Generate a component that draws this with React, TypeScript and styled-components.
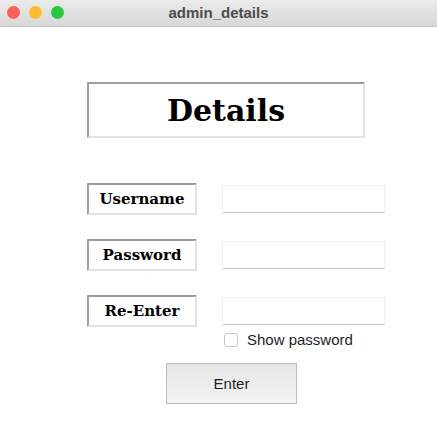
import { FC } from "react";
import styled, { createGlobalStyle } from "styled-components";

const GlobalStyle = createGlobalStyle`
  html, body {
    margin: 0;
    padding: 0;
    background: #ffffff;
  }
`;

const fields = ["Username", "Password", "Re-Enter"];

const App: FC = () => {
  return (
    <>
      <GlobalStyle />
      <Window>
        <TitleBar>
          <Lights>
            <Light color="#fe5f57" />
            <Light color="#febc2e" />
            <Light color="#27c93f" />
          </Lights>
          <WindowTitle>admin_details</WindowTitle>
        </TitleBar>

        <Content>
          <Heading>Details</Heading>

          <Form>
            {fields.map((name) => (
              <FieldRow key={name}>
                <FieldLabel>{name}</FieldLabel>
                <Entry type={name === "Username" ? "text" : "password"} />
              </FieldRow>
            ))}
          </Form>

          <CheckRow>
            <CheckBox type="checkbox" />
            <CheckText>Show password</CheckText>
          </CheckRow>

          <EnterButton>Enter</EnterButton>
        </Content>
      </Window>
    </>
  );
};

export default App;

const Window = styled.div`
  width: 437px;
  height: 426px;
  background: #ffffff;
  display: flex;
  flex-direction: column;
  overflow: hidden;
`;

const TitleBar = styled.div`
  position: relative;
  height: 26px;
  flex-shrink: 0;
  background: linear-gradient(#ebebeb, #d8d8d8);
  border-bottom: 1px solid #c2c2c2;
  display: flex;
  align-items: center;
  justify-content: center;
`;

const Lights = styled.div`
  position: absolute;
  left: 7px;
  top: 6px;
  display: flex;
  gap: 9px;
`;

const Light = styled.span<{ color: string }>`
  width: 13px;
  height: 13px;
  border-radius: 50%;
  background: ${(p) => p.color};
`;

const WindowTitle = styled.div`
  font-family: "Liberation Sans", Arial, sans-serif;
  font-weight: bold;
  font-size: 15px;
  color: #4d4d4d;
  margin-top: -2px;
`;

const Content = styled.div`
  display: flex;
  flex-direction: column;
  padding: 55px 0 0 87px;
`;

const sunken = `
  border-style: solid;
  border-width: 2px;
  border-color: #9e9e9e #e3e3e3 #e3e3e3 #9e9e9e;
  background: #ffffff;
  box-sizing: border-box;
`;

const Heading = styled.div`
  ${sunken}
  width: 278px;
  height: 56px;
  display: flex;
  align-items: center;
  justify-content: center;
  font-family: "DejaVu Serif", Georgia, serif;
  font-weight: bold;
  font-size: 30px;
  color: #000000;
`;

const Form = styled.div`
  display: flex;
  flex-direction: column;
  gap: 24px;
  margin-top: 45px;
`;

const FieldRow = styled.div`
  display: grid;
  grid-template-columns: 110px 163px;
  column-gap: 25px;
  align-items: center;
`;

const FieldLabel = styled.div`
  ${sunken}
  height: 32px;
  display: flex;
  align-items: center;
  justify-content: center;
  font-family: "DejaVu Serif", Georgia, serif;
  font-weight: bold;
  font-size: 15px;
  color: #000000;
`;

const Entry = styled.input`
  box-sizing: border-box;
  width: 163px;
  height: 28px;
  margin: 0;
  padding: 0 4px;
  border: 1px solid #efefef;
  border-bottom-color: #c8c8c8;
  background: #ffffff;
  outline: none;
`;

const CheckRow = styled.div`
  display: flex;
  align-items: center;
  gap: 9px;
  height: 16px;
  margin: 5px 0 0 137px;
`;

const CheckBox = styled.input`
  appearance: none;
  margin: 0;
  width: 14px;
  height: 14px;
  border: 1px solid #c6c6c6;
  border-radius: 3px;
  background: #ffffff;
`;

const CheckText = styled.span`
  font-family: "Liberation Sans", Arial, sans-serif;
  font-size: 15px;
  line-height: 16px;
  color: #1e1e1e;
`;

const EnterButton = styled.button`
  box-sizing: border-box;
  width: 131px;
  height: 41px;
  margin: 15px 0 0 79px;
  border: 1px solid #bdbdbd;
  background: linear-gradient(#e6e6e6, #f4f4f4);
  font-family: "Liberation Sans", Arial, sans-serif;
  font-size: 15px;
  color: #1e1e1e;
  padding: 0;
`;
